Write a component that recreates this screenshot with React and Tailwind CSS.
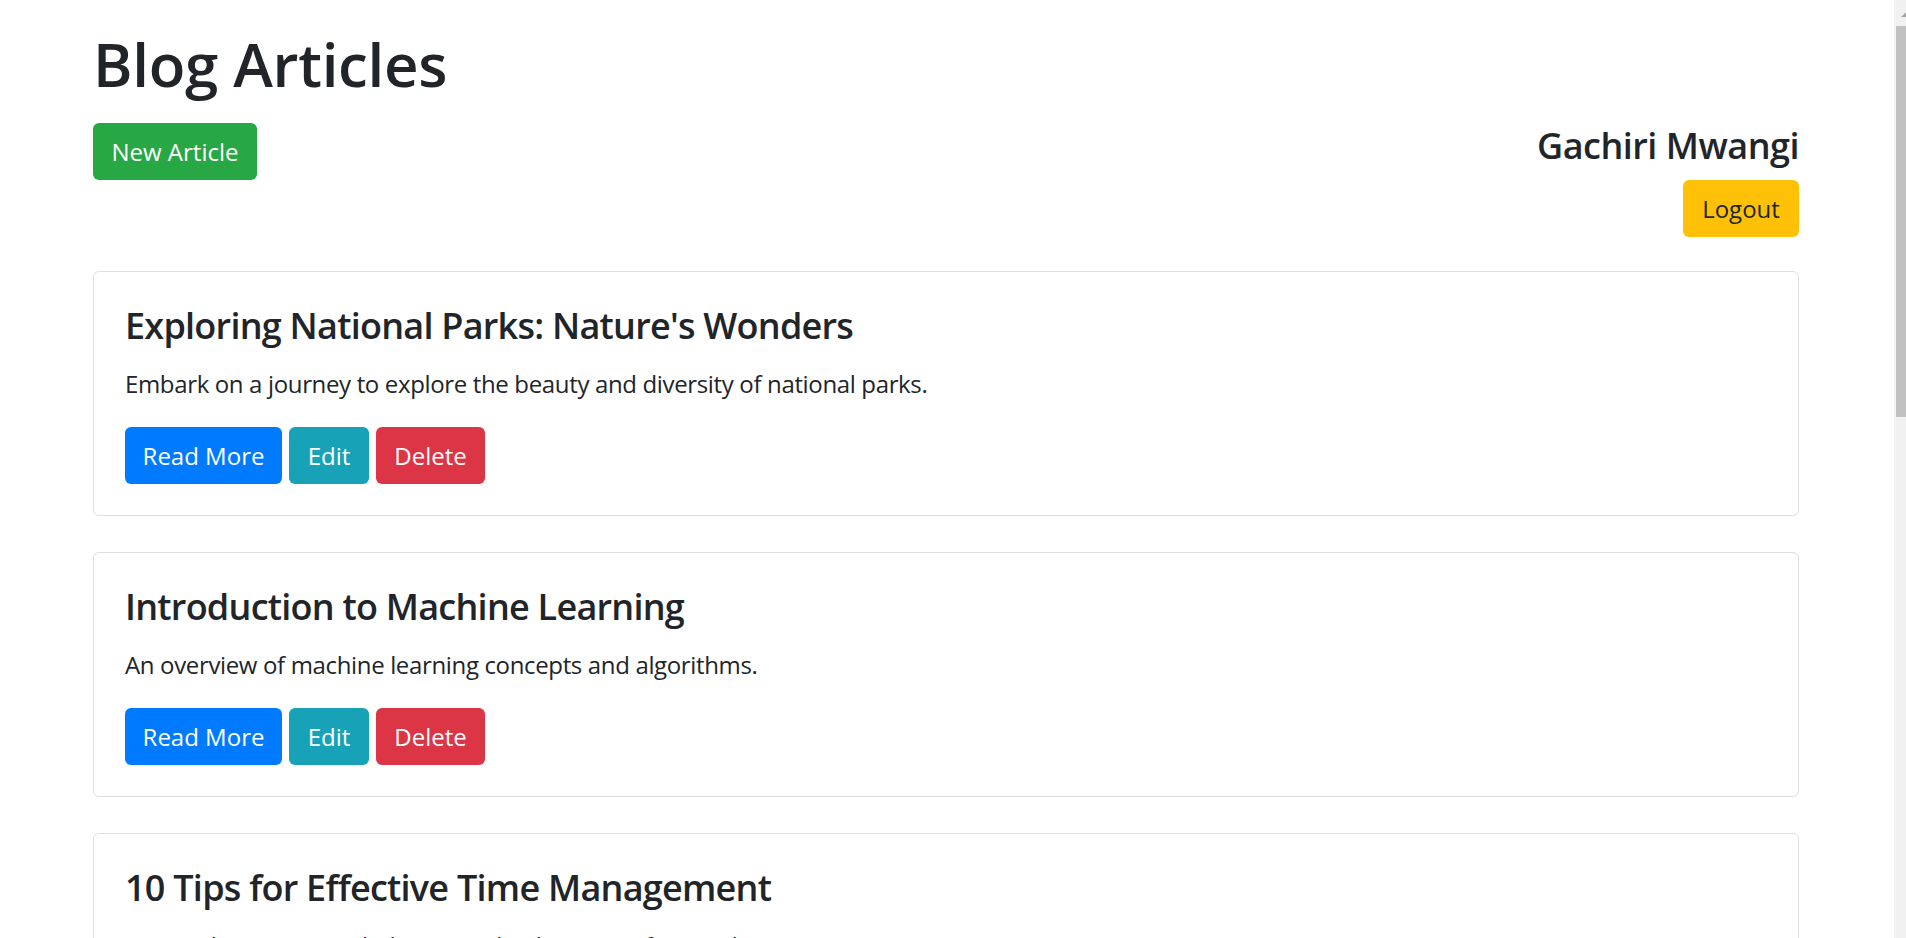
const articles = [
  {
    id: 1,
    title: "Exploring National Parks: Nature's Wonders",
    summary:
      "Embark on a journey to explore the beauty and diversity of national parks.",
  },
  {
    id: 2,
    title: "Introduction to Machine Learning",
    summary: "An overview of machine learning concepts and algorithms.",
  },
  {
    id: 3,
    title: "10 Tips for Effective Time Management",
    summary: "Practical strategies to help you make the most of every day.",
  },
];

const btn =
  "h-[57px] rounded-[6px] text-[24px] leading-[36px] flex items-center justify-center";

// browser scrollbar as seen in the screenshot (cut at the right edge)
const Scrollbar = () => (
  <div className="w-[12px] shrink-0 bg-[#f1f1f1] flex flex-col">
    <svg width="12" height="26" viewBox="0 0 12 26" className="shrink-0">
      <polygon points="7,17 12.7,11.5 18.4,17" fill="#a3a3a3" />
    </svg>
    <div className="ml-[2px] h-[391px] bg-[#c1c1c1]" />
  </div>
);

const App = () => {
  return (
    <div
      className="flex h-[938px] overflow-hidden bg-white text-[#212529]"
      style={{ fontFamily: '"Open Sans", "Noto Sans", sans-serif' }}
    >
      <div className="flex-1 overflow-hidden">
        <div className="ml-[93px] w-[1706px] pt-[28px]">
          <h1 className="text-[60px] leading-[72px] font-semibold tracking-[-0.3px]">
            Blog Articles
          </h1>

          <div className="mt-[23px] mb-[34px] flex justify-between items-start">
            <button className={`${btn} w-[164px] bg-[#28a745] text-white`}>
              New Article
            </button>
            <div className="flex flex-col items-end">
              <h4 className="pt-[1px] text-[36px] leading-[43px] font-semibold tracking-[-0.5px] mb-[13px]">
                Gachiri Mwangi
              </h4>
              <button className={`${btn} w-[116px] bg-[#ffc107] text-[#212529]`}>
                Logout
              </button>
            </div>
          </div>

          {articles.map((article) => (
            <div
              key={article.id}
              className="mb-[36px] border border-[#dfdfdf] rounded-[6px] px-[31px] pt-[32px] pb-[31px]"
            >
              <h4 className="text-[36px] leading-[43px] font-semibold tracking-[-0.75px] mb-[19px]">
                {article.title}
              </h4>
              <p className="text-[24px] leading-[36px] tracking-[-0.35px] mb-[25px]">
                {article.summary}
              </p>
              <div className="flex gap-[7px]">
                <button className={`${btn} w-[157px] bg-[#007bff] text-white`}>
                  Read More
                </button>
                <button className={`${btn} w-[80px] bg-[#17a2b8] text-white`}>
                  Edit
                </button>
                <button className={`${btn} w-[109px] bg-[#dc3545] text-white`}>
                  Delete
                </button>
              </div>
            </div>
          ))}
        </div>
      </div>
      <Scrollbar />
    </div>
  );
};

export default App;
